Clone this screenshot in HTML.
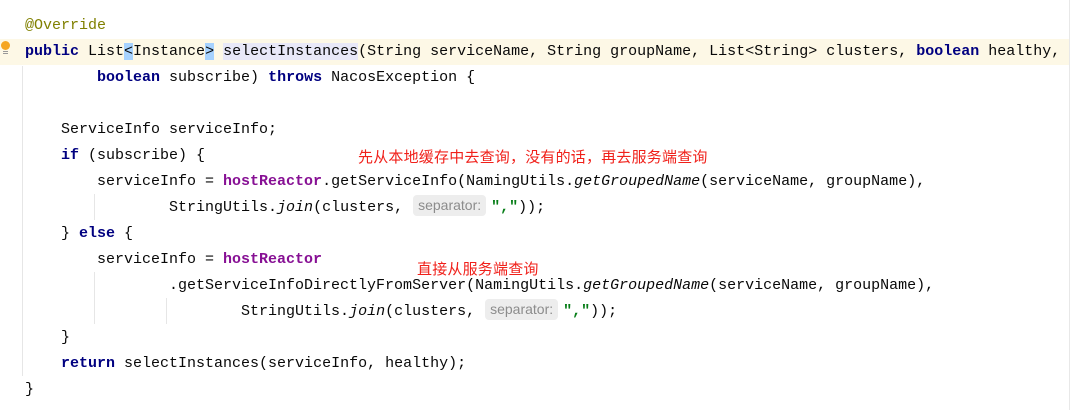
<!DOCTYPE html>
<html><head><meta charset="utf-8"><style>
body{margin:0;width:1090px;height:410px;background:#fff;position:relative;overflow:hidden;font-family:"Liberation Mono",monospace;font-size:15px;color:#080808}
.l{position:absolute;left:25px;height:26px;line-height:26px;white-space:pre}
.k{color:#000080;font-weight:bold}
.a{color:#808000}
.f{color:#871094;font-weight:bold}
.s{color:#067d17;font-weight:bold}
i{font-style:italic}
.h{display:inline-block;font-family:"Liberation Sans",sans-serif;font-size:14px;color:#8c8c8c;background:#ededed;border-radius:4px;line-height:21px;padding:0 5px;margin:0 5px 0 1px;vertical-align:1px}
.g{position:absolute;width:1px;background:#e6e6e6}
.cn{position:absolute;color:#f0201a;font-family:"Liberation Sans","Noto Sans CJK SC",sans-serif;font-size:15px;line-height:20px;letter-spacing:0.2px}
</style></head><body>
<div style="position:absolute;left:0;top:39px;width:1069px;height:26px;background:#fdf8e6"></div>
<div style="position:absolute;left:1069px;top:0;width:1px;height:410px;background:#e8e8e8"></div>
<div style="position:absolute;left:1px;top:41px;width:9px;height:9px;border-radius:50%;background:#f5a623"></div>
<div style="position:absolute;left:3px;top:51px;width:5px;height:1px;background:#999"></div>
<div style="position:absolute;left:3px;top:53px;width:5px;height:1px;background:#999"></div>
<div class="g" style="left:22px;top:66px;height:310px"></div>
<div class="g" style="left:94px;top:194px;height:26px"></div>
<div class="g" style="left:94px;top:272px;height:52px"></div>
<div class="g" style="left:166px;top:298px;height:26px"></div>
<div class="l a" style="top:13px">@Override</div>
<div class="l" style="top:39px"><span class="k">public</span> List<span style="background:#a6d2ff">&lt;</span>Instance<span style="background:#a6d2ff">&gt;</span> <span style="background:#e8e8f8">selectInstances</span>(String serviceName, String groupName, List&lt;String&gt; clusters, <span class="k">boolean</span> healthy,</div>
<div class="l" style="top:65px">        <span class="k">boolean</span> subscribe) <span class="k">throws</span> NacosException {</div>
<div class="l" style="top:117px">    ServiceInfo serviceInfo;</div>
<div class="l" style="top:143px">    <span class="k">if</span> (subscribe) {</div>
<div class="l" style="top:169px">        serviceInfo = <span class="f">hostReactor</span>.getServiceInfo(NamingUtils.<i>getGroupedName</i>(serviceName, groupName),</div>
<div class="l" style="top:195px">                StringUtils.<i>join</i>(clusters, <span class="h">separator:</span><span class="s">","</span>));</div>
<div class="l" style="top:221px">    } <span class="k">else</span> {</div>
<div class="l" style="top:247px">        serviceInfo = <span class="f">hostReactor</span></div>
<div class="l" style="top:273px">                .getServiceInfoDirectlyFromServer(NamingUtils.<i>getGroupedName</i>(serviceName, groupName),</div>
<div class="l" style="top:299px">                        StringUtils.<i>join</i>(clusters, <span class="h">separator:</span><span class="s">","</span>));</div>
<div class="l" style="top:325px">    }</div>
<div class="l" style="top:351px">    <span class="k">return</span> selectInstances(serviceInfo, healthy);</div>
<div class="l" style="top:377px">}</div>
<div class="cn" style="left:358px;top:148px">先从本地缓存中去查询，没有的话，再去服务端查询</div>
<div class="cn" style="left:417px;top:260px">直接从服务端查询</div>
</body></html>
